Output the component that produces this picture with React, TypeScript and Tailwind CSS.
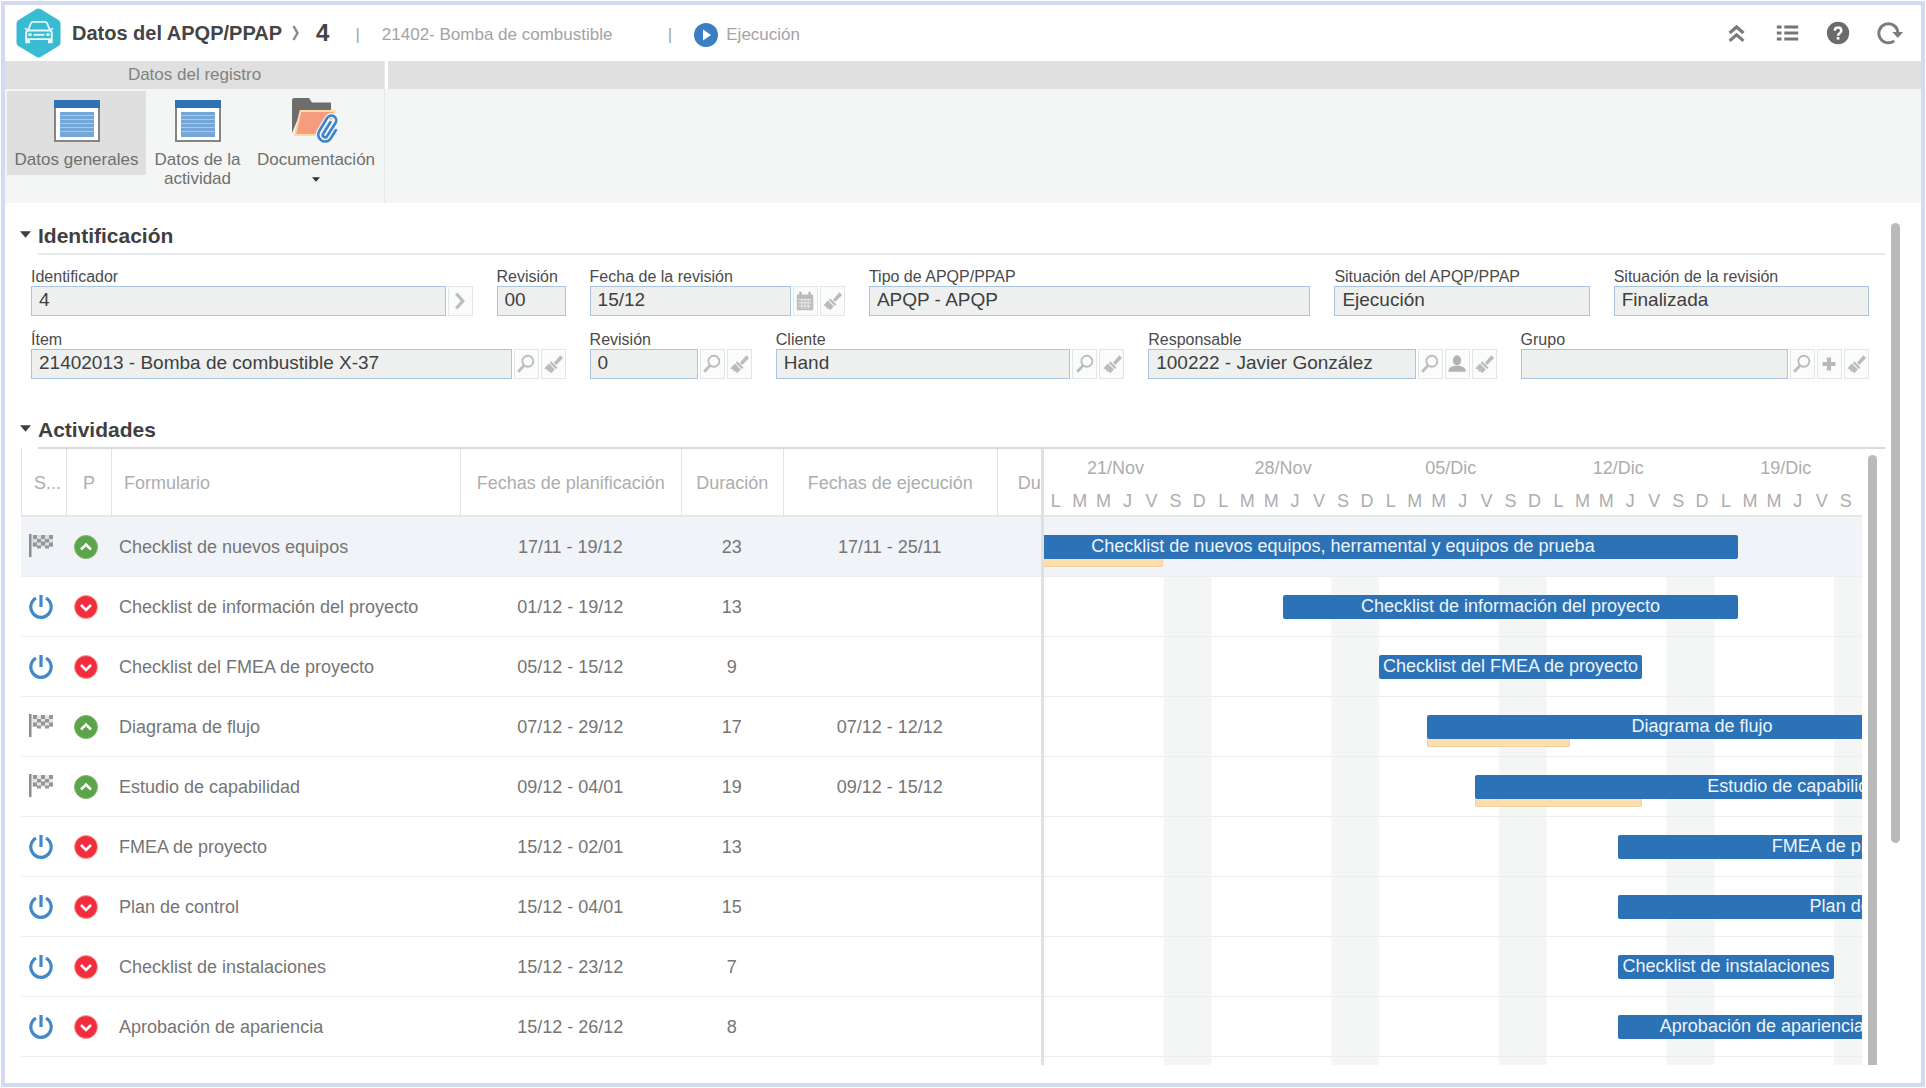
import { useId, useState } from 'react'
import type { ReactNode } from 'react'
import clsx from 'clsx'

type IconName = 'next' | 'search' | 'brush' | 'calendar' | 'user' | 'plus'

interface Field {
  label: string
  value: string
  span: string
  actions?: IconName[]
}

interface Activity {
  name: string
  barLabel?: string
  planned: string
  duration: number
  executed?: string
  // days counted from 21/Nov, end is exclusive
  plan: [number, number]
  real?: [number, number]
}

const FIELDS: Field[] = [
  { label: 'Identificador', value: '4', span: 'col-span-5', actions: ['next'] },
  { label: 'Revisión', value: '00', span: 'col-span-1' },
  { label: 'Fecha de la revisión', value: '15/12', span: 'col-span-3', actions: ['calendar', 'brush'] },
  { label: 'Tipo de APQP/PPAP', value: 'APQP - APQP', span: 'col-span-5' },
  { label: 'Situación del APQP/PPAP', value: 'Ejecución', span: 'col-span-3' },
  { label: 'Situación de la revisión', value: 'Finalizada', span: 'col-span-3' },
  { label: 'Ítem', value: '21402013 - Bomba de combustible X-37', span: 'col-span-6', actions: ['search', 'brush'] },
  { label: 'Revisión', value: '0', span: 'col-span-2', actions: ['search', 'brush'] },
  { label: 'Cliente', value: 'Hand', span: 'col-span-4', actions: ['search', 'brush'] },
  { label: 'Responsable', value: '100222 - Javier González', span: 'col-span-4', actions: ['search', 'user', 'brush'] },
  { label: 'Grupo', value: '', span: 'col-span-4', actions: ['search', 'plus', 'brush'] },
]

const ACTIVITIES: Activity[] = [
  {
    name: 'Checklist de nuevos equipos',
    barLabel: 'Checklist de nuevos equipos, herramental y equipos de prueba',
    planned: '17/11 - 19/12',
    duration: 23,
    executed: '17/11 - 25/11',
    plan: [-4, 29],
    real: [-4, 5],
  },
  { name: 'Checklist de información del proyecto', planned: '01/12 - 19/12', duration: 13, plan: [10, 29] },
  { name: 'Checklist del FMEA de proyecto', planned: '05/12 - 15/12', duration: 9, plan: [14, 25] },
  { name: 'Diagrama de flujo', planned: '07/12 - 29/12', duration: 17, executed: '07/12 - 12/12', plan: [16, 39], real: [16, 22] },
  { name: 'Estudio de capabilidad', planned: '09/12 - 04/01', duration: 19, executed: '09/12 - 15/12', plan: [18, 45], real: [18, 25] },
  { name: 'FMEA de proyecto', planned: '15/12 - 02/01', duration: 13, plan: [24, 43] },
  { name: 'Plan de control', planned: '15/12 - 04/01', duration: 15, plan: [24, 45] },
  { name: 'Checklist de instalaciones', planned: '15/12 - 23/12', duration: 7, plan: [24, 33] },
  { name: 'Aprobación de apariencia', planned: '15/12 - 26/12', duration: 8, plan: [24, 36] },
]

const WEEKS = ['21/Nov', '28/Nov', '05/Dic', '12/Dic', '19/Dic']
const WEEKDAYS = ['L', 'M', 'M', 'J', 'V', 'S', 'D']
const TOTAL_DAYS = WEEKS.length * WEEKDAYS.length

const span = ([start, end]: [number, number]) => ({
  marginLeft: `${(start / TOTAL_DAYS) * 100}%`,
  width: `${((end - start) / TOTAL_DAYS) * 100}%`,
})

/* ---------- icons ---------- */

function AppLogo() {
  return (
    <svg viewBox="0 0 45 50" className="h-[50px] w-[45px] shrink-0" aria-hidden="true">
      <path d="M20.5 1a4 4 0 0 1 4 0l18 11a4 4 0 0 1 2 3.500v19a4 4 0 0 1-2 3.500l-18 11a4 4 0 0 1-4 0l-18-11a4 4 0 0 1-2-3.500v-19a4 4 0 0 1 2-3.500z" fill="#39bcd1" />
      <g fill="none" stroke="#e9f8fa" strokeWidth="1.800" strokeLinejoin="round">
        <path d="M12 22.500l3-7.300a2 2 0 0 1 1.900-1.300h12.200a2 2 0 0 1 1.900 1.300l3 7.300" />
        <path d="M12.500 22.500h21a2.300 2.300 0 0 1 2.300 2.300v6.400H10.200v-6.400a2.300 2.300 0 0 1 2.300-2.300z" />
        <path d="M17.500 26.800h11" />
      </g>
      <path d="M9.300 31h4.700v4.200h-4.700zM32 31h4.700v4.200H32zM8.800 19.800l2.700.6v1.800l-2.700-1zM37.200 19.800l-2.700.6v1.800l2.700-1z" fill="#e9f8fa" />
      <rect x="12.200" y="25.300" width="3.600" height="2.600" rx="1" fill="#e9f8fa" />
      <rect x="30.200" y="25.300" width="3.600" height="2.600" rx="1" fill="#e9f8fa" />
    </svg>
  )
}

function FormIcon() {
  return (
    <svg viewBox="0 0 46 42" className="h-[42px] w-[46px]" aria-hidden="true">
      <rect x="1" y="1" width="44" height="40" fill="#fff" stroke="#858585" strokeWidth="2" />
      <rect width="46" height="8" fill="#2e73b6" />
      <rect x="6" y="12" width="34" height="25" fill="#74a6d7" />
      <path d="M6 15.500h34M6 19.500h34M6 23.500h34M6 27.500h34M6 31.500h34" stroke="#a9c8e6" strokeWidth="1.200" />
    </svg>
  )
}

function FolderIcon() {
  const clip =
    'M38.500 24l-7.500 12a2.300 2.300 0 0 0 3.900 2.400L43.500 25a4.800 4.800 0 0 0-8.200-5.200L27 33.500a6.800 6.800 0 0 0 11.500 7.200l5.500-8.700'
  return (
    <svg viewBox="0 0 48 46" className="h-[46px] w-12" aria-hidden="true">
      <path d="M0 35V1.500L1.500 0H17l3 4.500h19V16H8z" fill="#6d6d6d" />
      <path d="M8.500 13h34L36 37H3z" fill="#f89c80" stroke="#fbd9a8" strokeWidth="2" />
      <path d={clip} fill="none" stroke="#eef5fc" strokeWidth="5" strokeLinecap="round" />
      <path d={clip} fill="none" stroke="#3f83c6" strokeWidth="2.600" strokeLinecap="round" />
    </svg>
  )
}

function PlayIcon() {
  return (
    <svg viewBox="0 0 24 24" className="size-6 shrink-0" aria-hidden="true">
      <circle cx="12" cy="12" r="12" fill="#3a7fc1" />
      <path d="M9 6.500v11l8-5.500z" fill="#fff" />
    </svg>
  )
}

const TOOLBAR: { title: string; icon: ReactNode }[] = [
  {
    title: 'Contraer',
    icon: <path d="M6 13l7.500-6.500L21 13M6 21.500l7.500-6.500 7.500 6.500" fill="none" stroke="#7c7c7c" strokeWidth="3.500" />,
  },
  {
    title: 'Lista',
    icon: <path d="M2 6.500h5M10 6.500h15M2 13h5M10 13h15M2 19.500h5M10 19.500h15" fill="none" stroke="#757575" strokeWidth="3.200" />,
  },
  {
    title: 'Ayuda',
    icon: (
      <>
        <circle cx="13" cy="13" r="12" fill="#6b6b6b" />
        <path d="M9.500 10.500c0-4.500 7-4.500 7 0 0 2.500-3.500 2.500-3.500 5.500" fill="none" stroke="#fff" strokeWidth="2.600" />
        <rect x="11.600" y="17.300" width="2.800" height="2.800" fill="#fff" />
      </>
    ),
  },
  {
    title: 'Actualizar',
    icon: (
      <>
        <path d="M18.500 21.500a10.300 10.300 0 1 1 4-9.500" fill="none" stroke="#7c7c7c" strokeWidth="3.200" />
        <path d="M16.500 12h11.500l-5.500 6.500z" fill="#7c7c7c" />
      </>
    ),
  },
]

const ACTION_ICONS: Record<IconName, { title: string; icon: ReactNode }> = {
  next: {
    title: 'Ver',
    icon: <path d="M8 4l7 8-7 8" fill="none" stroke="#bdbdbd" strokeWidth="3.500" />,
  },
  search: {
    title: 'Buscar',
    icon: (
      <g fill="none" stroke="#bbb">
        <circle cx="14" cy="9" r="6" strokeWidth="2" />
        <path d="M10 13.500L3.500 20.500" strokeWidth="3" />
      </g>
    ),
  },
  brush: {
    title: 'Limpiar',
    icon: (
      <g fill="#bbb">
        <path d="M20 2.500l3 3-7.500 7.500L13 10.500z" />
        <path d="M10 9l7 7-2 1.500-6.500-6.500z" />
        <path d="M7.500 11.500l6.500 6.500-4 4-2-2-1.500.5-1-2.500-3-1z" />
      </g>
    ),
  },
  calendar: {
    title: 'Calendario',
    icon: (
      <g>
        <rect x="3" y="5" width="18" height="17" rx="1" fill="#bdbdbd" />
        <path d="M7 2v6M17 2v6" stroke="#b5b5b5" strokeWidth="2.500" />
        <path d="M5 10.500h14M5 14h14M5 17.500h14M8.500 9.500v11M12 9.500v11M15.500 9.500v11" stroke="#eee" strokeWidth="1" />
      </g>
    ),
  },
  user: {
    title: 'Usuario',
    icon: (
      <g fill="#b3b3b3">
        <ellipse cx="12" cy="8" rx="4.500" ry="5.500" />
        <path d="M2.500 20.500c0-4.500 3-5.500 7-6.500h5c4 1 7 2 7 6.500z" />
      </g>
    ),
  },
  plus: {
    title: 'Agregar',
    icon: <path d="M12 5v14M5 12h14" stroke="#b9b9b9" strokeWidth="4.500" />,
  },
}

function FlagIcon() {
  return (
    <svg viewBox="0 0 25 28" className="h-7 w-[25px]" role="img" aria-label="Finalizada">
      <path d="M0 1h2.500v23H0z" fill="#8c8c8c" />
      <path
        d="M4 2h4v4H4zM12 2h4v4h-4zM20 2h4v4h-4zM8 6h4v3.500H8zM16 6h4v3.500h-4zM4 9.500h4v4H4zM12 8.500h4v4h-4zM20 9.500h4v4h-4zM8 12.500h4v3H8zM16 12.500h4v3h-4z"
        fill="#9a9a9a"
      />
      <path d="M2.500 2h21.500v12H2.500z" fill="#858585" fillOpacity="0.200" />
    </svg>
  )
}

function PowerIcon() {
  return (
    <svg viewBox="0 0 24 24" className="size-6" role="img" aria-label="En ejecución">
      <g fill="none" stroke="#4187c9" strokeWidth="3.200">
        <path d="M7 3.200a10.200 10.200 0 1 0 10 0" />
        <path d="M12 0v12" />
      </g>
    </svg>
  )
}

function StatusDot({ done }: { done: boolean }) {
  return (
    <svg viewBox="0 0 24 24" className="size-6" role="img" aria-label={done ? 'A tiempo' : 'Atrasada'}>
      <circle cx="12" cy="12" r="11.500" fill={done ? '#5ba44a' : '#f42c40'} stroke={done ? '#7fb56f' : '#f5a08c'} strokeWidth="1" />
      <path d={done ? 'M7 14.500l5-5 5 5' : 'M7 10l5 5 5-5'} fill="none" stroke="#fff" strokeWidth="2.500" />
    </svg>
  )
}

function Caret({ className = '' }: { className?: string }) {
  return (
    <svg viewBox="0 0 12 7" className={className} aria-hidden="true">
      <path d="M0 0h12L6 7z" fill="currentColor" />
    </svg>
  )
}

/* ---------- header + ribbon ---------- */

function Header() {
  return (
    <header className="flex h-14 items-center pr-[18px] pl-[11px]">
      <AppLogo />
      <h1 className="ml-[11px] text-[20px] font-bold text-[#444]">Datos del APQP/PPAP</h1>
      <svg viewBox="0 0 8 16" className="ml-2.5 h-4 w-2" aria-hidden="true">
        <path d="M1.500 1l4 7-4 7" fill="none" stroke="#8a8a8a" strokeWidth="2.500" />
      </svg>
      <span className="ml-4 text-2xl font-bold text-[#444]">4</span>
      <div className="flex flex-1 items-center pt-1 text-[17px] text-[#a3a3a3]">
        <span className="ml-[26px]">|</span>
        <span className="ml-[22px] w-[286px]">21402- Bomba de combustible</span>
        <span>|</span>
        <span className="ml-[22px] flex items-center gap-2">
          <PlayIcon />
          Ejecución
        </span>
      </div>
      <div className="flex gap-[25px]">
        {TOOLBAR.map(({ title, icon }) => (
          <button key={title} type="button" aria-label={title}>
            <svg viewBox="0 0 28 26" className="h-[26px] w-[26px]">
              {icon}
            </svg>
          </button>
        ))}
      </div>
    </header>
  )
}

function Ribbon() {
  return (
    <div className="flex text-[17px] leading-[19px] text-[#6f6f6f]">
      <section className="w-[380px] shrink-0 border-r border-[#e6e9e9] bg-[#f4f6f6]">
        <h2 className="flex h-7 items-center justify-center bg-[#e0e0e0] pb-0.5 text-[#828282]">
          <span>Datos del registro</span>
        </h2>
        <div className="flex h-[114px] items-start pt-0.5 pl-0.5">
          <button type="button" className="flex h-[84px] w-[139px] flex-col items-center gap-2 bg-[#dfdfdf] pt-[9px]">
            <FormIcon />
            Datos generales
          </button>
          <button type="button" className="flex w-[103px] flex-col items-center gap-2 pt-[9px]">
            <FormIcon />
            Datos de la actividad
          </button>
          <button type="button" className="flex w-[134px] flex-col items-center pt-[7px]">
            <FolderIcon />
            <span className="mt-1.5">Documentación</span>
            <Caret className="mt-2 h-[5px] w-2 text-[#333]" />
          </button>
        </div>
      </section>
      <div className="flex-1 bg-[#f4f6f6]">
        <div className="h-7 border-l-3 border-white bg-[#e0e0e0]" />
      </div>
    </div>
  )
}

/* ---------- sections ---------- */

function Section({ title, line, className, children }: { title: string; line: string; className?: string; children: ReactNode }) {
  const [open, setOpen] = useState(true)
  return (
    <section className={className}>
      <h2 className="pl-[15px] text-[21px] leading-[34px] font-bold text-[#3f3f3f]">
        <button type="button" aria-expanded={open} onClick={() => setOpen(!open)} className="flex w-full items-center gap-[7px]">
          <Caret className={clsx('mb-1.5 h-[7px] w-[11px]', !open && '-rotate-90')} />
          <span className={clsx('flex-1 border-b-2 text-left', line)}>{title}</span>
        </button>
      </h2>
      {open && children}
    </section>
  )
}

function FieldBox({ label, value, span: colSpan, actions = [] }: Field) {
  const id = useId()
  return (
    <div className={colSpan}>
      <label htmlFor={id} className="block h-5 text-base leading-[22px] whitespace-nowrap text-[#4a4a4a]">
        {label}
      </label>
      <div className="flex h-[30px] gap-[2px]">
        <input
          id={id}
          readOnly
          defaultValue={value}
          className="min-w-0 flex-1 border border-[#a9c4e0] bg-[#eef0f0] px-[7px] pb-0.5 text-[19px] text-[#3f3f3f] outline-none"
        />
        {actions.map(name => (
          <button
            key={name}
            type="button"
            aria-label={`${ACTION_ICONS[name].title} ${label}`}
            className="flex w-[25px] items-center justify-center border border-[#e3e6e6] bg-[#fafbfb]"
          >
            <svg viewBox="0 0 24 24" className="size-[22px]">
              {ACTION_ICONS[name].icon}
            </svg>
          </button>
        ))}
      </div>
    </div>
  )
}

function ActivityTable() {
  const head = 'overflow-hidden border-l border-[#e1e5e5] pt-0.5 font-normal whitespace-nowrap'
  return (
    <table className="w-full table-fixed border-separate border-spacing-0 text-lg text-[#757575]">
      <colgroup>
        <col className="w-[45px]" />
        <col className="w-[45px]" />
        <col />
        <col className="w-[221px]" />
        <col className="w-[102px]" />
        <col className="w-[214px]" />
        <col className="w-11" />
      </colgroup>
      <thead className="text-[#adadad]">
        <tr className="h-[68px] [&>th]:border-b-2 [&>th]:border-b-[#e5e7e7]">
          <th className={clsx(head, 'pl-3 text-left')}>S...</th>
          <th className={head}>P</th>
          <th className={clsx(head, 'pl-3 text-left')}>Formulario</th>
          <th className={head}>Fechas de planificación</th>
          <th className={head}>Duración</th>
          <th className={head}>Fechas de ejecución</th>
          <th className={clsx(head, 'pl-5 text-left')}>Duración</th>
        </tr>
      </thead>
      <tbody>
        {ACTIVITIES.map((a, i) => (
          <tr
            key={a.name}
            className={clsx('h-[60px] text-center [&>td]:border-b [&>td]:border-[#ededed]', i === 0 && 'bg-[#f0f3f8]')}
          >
            <td className="pl-2">{a.executed ? <FlagIcon /> : <PowerIcon />}</td>
            <td className="pl-2">
              <StatusDot done={!!a.executed} />
            </td>
            <td className="pl-2 text-left whitespace-nowrap">{a.name}</td>
            <td>{a.planned}</td>
            <td>{a.duration}</td>
            <td>{a.executed}</td>
            <td />
          </tr>
        ))}
      </tbody>
    </table>
  )
}

function GanttChart() {
  // 35 days are laid out, a bit more than 34 of them stay visible
  return (
    <div className="w-[102.4%] text-lg">
      <div className="h-[68px] border-b-2 border-[#e5e7e7] pt-[5px] text-center text-[#adadad]">
        <div className="grid grid-cols-5 leading-7">
          {WEEKS.map(week => (
            <span key={week} className="pr-6">
              {week}
            </span>
          ))}
        </div>
        <div className="grid grid-cols-[repeat(35,minmax(0,1fr))] pt-[5px] leading-7">
          {WEEKS.map(week => WEEKDAYS.map((day, i) => <span key={week + i}>{day}</span>))}
        </div>
      </div>
      {ACTIVITIES.map((a, i) => (
        <div
          key={a.name}
          className={clsx(
            'h-[60px] overflow-hidden border-b border-[#ededed] pt-[18px]',
            i === 0
              ? 'bg-[#f0f3f8]'
              : 'bg-[linear-gradient(to_right,transparent_71.43%,#f3f6f5_71.43%)] bg-[length:20%_100%]'
          )}
        >
          <GanttBar activity={a} />
        </div>
      ))}
      <div className="h-2 bg-[linear-gradient(to_right,transparent_71.43%,#f3f6f5_71.43%)] bg-[length:20%_100%]" />
    </div>
  )
}

function GanttBar({ activity }: { activity: Activity }) {
  return (
    <>
      <div style={span(activity.plan)} className="h-6 rounded-xs bg-[#2c72b6] text-center leading-[23px] whitespace-nowrap text-[#eef5fc]">
        {activity.barLabel ?? activity.name}
      </div>
      {activity.real && <div style={span(activity.real)} className="h-2 rounded-b-xs border border-t-0 border-[#f6cf9c] bg-[#fcdfae]" />}
    </>
  )
}

export default function App() {
  return (
    <div className="min-h-screen bg-white p-px font-['Liberation_Sans',Arial,sans-serif]">
      <div className="flex min-h-[calc(100vh-2px)] flex-col border-4 border-[#d3dbf3]">
        <Header />
        <Ribbon />
        <main className="flex pt-4 pr-[21px] pb-[18px]">
          <div className="min-w-0 flex-1">
            <Section title="Identificación" line="border-[#e6e9e9]" className="pr-1.5">
              <div className="grid grid-cols-[repeat(20,minmax(0,1fr))] gap-x-6 gap-y-[13px] pt-[11px] pr-4 pl-[26px]">
                {FIELDS.map((f, i) => (
                  <FieldBox key={i} {...f} />
                ))}
              </div>
            </Section>
            <Section title="Actividades" line="border-[#d8dbdb]" className="mt-[34px] pr-1.5">
              <div className="flex pl-4">
                <div className="grid min-w-0 flex-1 grid-cols-[minmax(0,5fr)_minmax(0,4fr)]">
                  <div className="overflow-hidden border-r-[3px] border-[#dfe1e1]">
                    <ActivityTable />
                  </div>
                  <div className="overflow-hidden">
                    <GanttChart />
                  </div>
                </div>
                <div className="mt-1.5 mr-2 ml-1.5 w-[9px] rounded-t-full bg-[#bababa]" />
              </div>
            </Section>
          </div>
          <div className="mt-1 h-[620px] w-[9px] shrink-0 rounded-full bg-[#bababa]" />
        </main>
      </div>
    </div>
  )
}
